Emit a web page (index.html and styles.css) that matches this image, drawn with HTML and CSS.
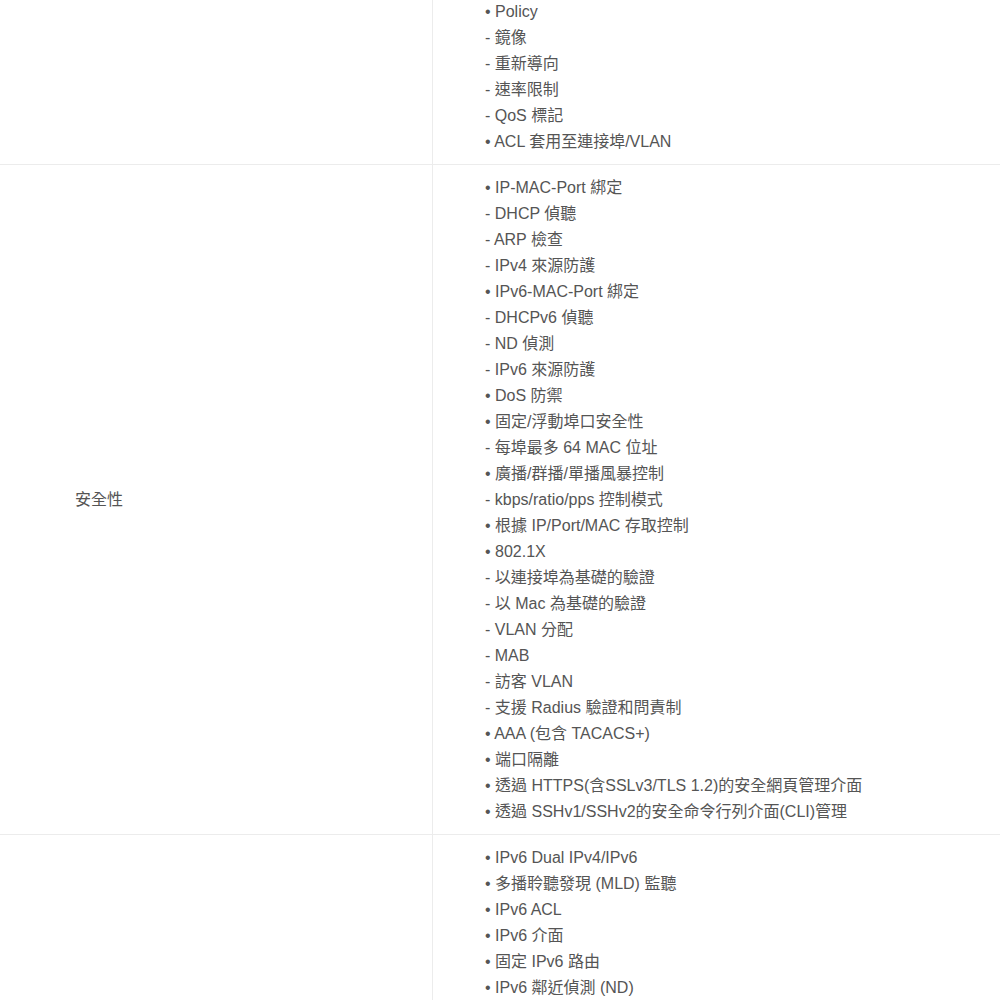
FILE: index.html
```html
<!DOCTYPE html>
<html lang="zh-TW">
<head>
  <meta charset="UTF-8">
  <meta name="viewport" content="width=device-width, initial-scale=1.0">
  <title>規格</title>
  <link rel="stylesheet" href="styles.css">
</head>
<body>
  <table class="spec">
    <tr>
      <td class="label"></td>
      <td class="value">
        <ul>
          <li>• Policy</li>
          <li>- 鏡像</li>
          <li>- 重新導向</li>
          <li>- 速率限制</li>
          <li>- QoS 標記</li>
          <li>• ACL 套用至連接埠/VLAN</li>
        </ul>
      </td>
    </tr>
    <tr>
      <td class="label">安全性</td>
      <td class="value">
        <ul>
          <li>• IP-MAC-Port 綁定</li>
          <li>- DHCP 偵聽</li>
          <li>- ARP 檢查</li>
          <li>- IPv4 來源防護</li>
          <li>• IPv6-MAC-Port 綁定</li>
          <li>- DHCPv6 偵聽</li>
          <li>- ND 偵測</li>
          <li>- IPv6 來源防護</li>
          <li>• DoS 防禦</li>
          <li>• 固定/浮動埠口安全性</li>
          <li>- 每埠最多 64 MAC 位址</li>
          <li>• 廣播/群播/單播風暴控制</li>
          <li>- kbps/ratio/pps 控制模式</li>
          <li>• 根據 IP/Port/MAC 存取控制</li>
          <li>• 802.1X</li>
          <li>- 以連接埠為基礎的驗證</li>
          <li>- 以 Mac 為基礎的驗證</li>
          <li>- VLAN 分配</li>
          <li>- MAB</li>
          <li>- 訪客 VLAN</li>
          <li>- 支援 Radius 驗證和問責制</li>
          <li>• AAA (包含 TACACS+)</li>
          <li>• 端口隔離</li>
          <li>• 透過 HTTPS(含SSLv3/TLS 1.2)的安全網頁管理介面</li>
          <li>• 透過 SSHv1/SSHv2的安全命令行列介面(CLI)管理</li>
        </ul>
      </td>
    </tr>
    <tr>
      <td class="label"></td>
      <td class="value">
        <ul>
          <li>• IPv6 Dual IPv4/IPv6</li>
          <li>• 多播聆聽發現 (MLD) 監聽</li>
          <li>• IPv6 ACL</li>
          <li>• IPv6 介面</li>
          <li>• 固定 IPv6 路由</li>
          <li>• IPv6 鄰近偵測 (ND)</li>
        </ul>
      </td>
    </tr>
  </table>
</body>
</html>
```

FILE: styles.css
```css
body {
  margin: 0;
  background: #fff;
  font-family: "Liberation Sans", Arial, "Noto Sans CJK TC", sans-serif;
  font-size: 16px;
  color: #555;
}
.spec {
  width: 1000px;
  margin-top: -12px;
  border-collapse: collapse;
}
.spec td {
  padding: 10px 0 9px;
  border-bottom: 1px solid #ececec;
  vertical-align: middle;
}
.spec tr:first-child td {
  border-top: 1px solid #ececec;
}
.label {
  width: 357px;
  padding-left: 75px !important;
  border-right: 1px solid #ececec;
  line-height: 26px;
}
.value {
  padding-left: 52px !important;
}
.value ul {
  list-style: none;
  margin: 0;
  padding: 0;
}
.value li {
  height: 26px;
  line-height: 26px;
  white-space: nowrap;
}
```
